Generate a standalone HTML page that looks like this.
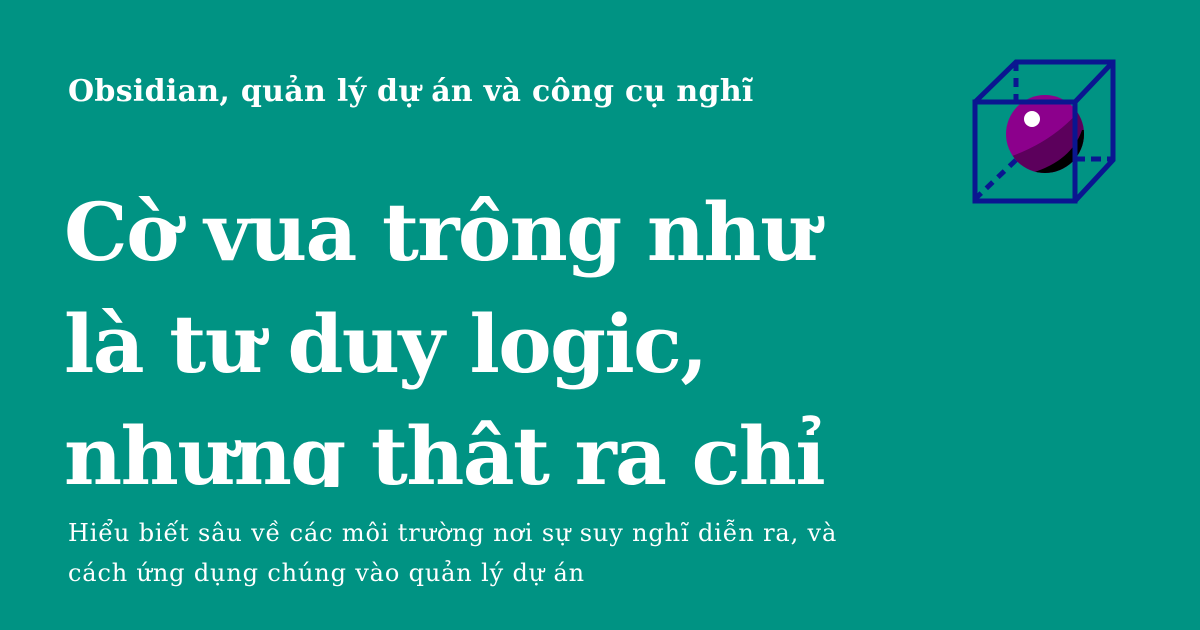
<!DOCTYPE html>
<html><head><meta charset="utf-8"><style>
html,body{margin:0;padding:0}
body{width:1200px;height:630px;background:#009383;position:relative;overflow:hidden;color:#fff;font-family:"DejaVu Serif","Liberation Serif",serif}
.sub{position:absolute;left:68px;top:74px;font-size:30px;font-weight:bold;white-space:nowrap;letter-spacing:0.3px}
.title{position:absolute;left:64px;top:176px;width:900px;height:311px;overflow:hidden;font-size:80px;font-weight:bold;line-height:112px;letter-spacing:-1.6px;white-space:nowrap}
.desc{position:absolute;left:68px;top:513px;font-size:24px;line-height:40px;letter-spacing:0.85px;white-space:nowrap}
svg{position:absolute;left:0;top:0}
</style></head><body>
<div class="sub">Obsidian, quản lý dự án và công cụ nghĩ</div>
<div class="title">Cờ vua trông như<br>là tư duy logic,<br>nhưng thật ra chỉ</div>
<div class="desc">Hiểu biết sâu về các môi trường nơi sự suy nghĩ diễn ra, và<br>cách ứng dụng chúng vào quản lý dự án</div>
<svg width="1200" height="630">
<defs><clipPath id="c"><circle cx="1045" cy="134" r="39"/></clipPath></defs>
<g fill="none" stroke="#0a1690" stroke-width="5">
<line x1="1016" y1="62" x2="1016" y2="100" stroke-dasharray="9,7"/>
<line x1="1016" y1="160" x2="974" y2="200" stroke-dasharray="9,7"/>
<line x1="1075" y1="159" x2="1113" y2="159" stroke-dasharray="10,6"/>
</g>
<circle cx="1045" cy="134" r="39" fill="#8c008c"/>
<g clip-path="url(#c)">
<path d="M1000 160 Q1050 145 1080 110 L1095 110 L1095 190 L1000 190Z" fill="#5c005c"/>
<path d="M1020 176 Q1070 165 1082 130 L1095 130 L1095 190 L1020 190Z" fill="#000"/>
</g>
<circle cx="1032" cy="119" r="8" fill="#fff"/>
<g fill="none" stroke="#0a1690" stroke-width="5">
<rect x="975" y="102" width="100" height="99"/>
<polyline points="975,102 1016,62 1113,62 1113,160 1075,201"/>
<line x1="1075" y1="102" x2="1113" y2="62"/>
</g>
</svg>
</body></html>
